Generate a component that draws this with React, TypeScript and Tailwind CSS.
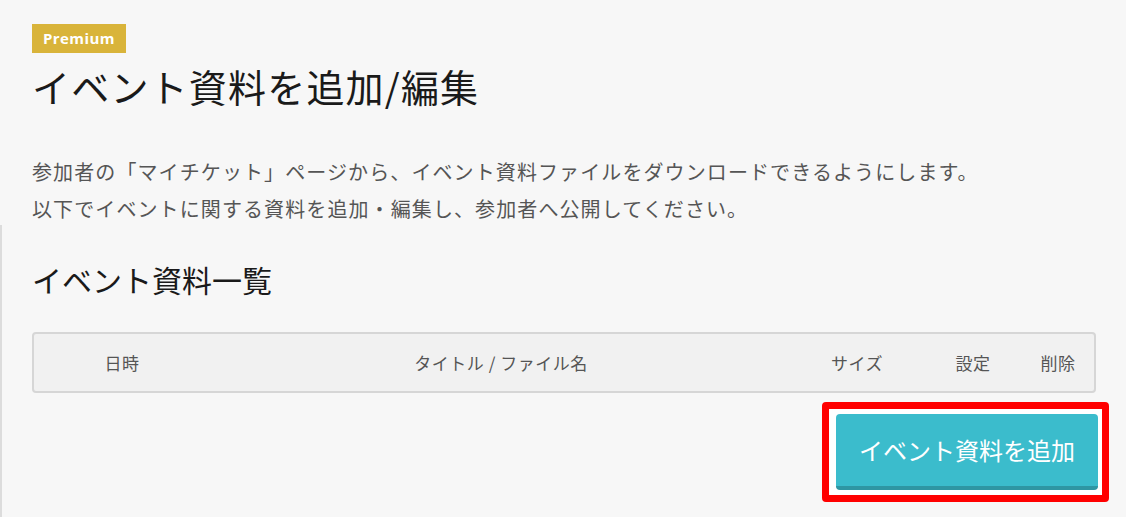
const jp = { fontFamily: '"Noto Sans CJK JP", "Liberation Sans", sans-serif' };

export default function App() {
  return (
    <div className="relative h-[517px] w-[1126px] overflow-hidden bg-[#f7f7f7]" style={jp}>
      {/* left edge line */}
      <div className="absolute left-0 top-[225px] bottom-0 w-[2px] bg-[#dcdcdc]" />

      <div className="pl-[32px] pr-[30px] pt-[24px]">
        <span
          className="inline-block bg-[#d9b43a] px-[11px] py-[5px] text-[15px] font-bold leading-[19px] tracking-[0.4px] text-white"
          style={{ fontFamily: '"Open Sans", "Liberation Sans", sans-serif' }}
        >
          Premium
        </span>

        <h1 className="mt-[7px] text-[38px] leading-[52px] font-normal tracking-[1.2px] text-[#1a1a1a]">
          イベント資料を追加/編集
        </h1>

        <div className="mt-[41px] text-[20px] leading-[37px] tracking-[1.1px] text-[#555]">
          <p>参加者の「マイチケット」ページから、イベント資料ファイルをダウンロードできるようにします。</p>
          <p>以下でイベントに関する資料を追加・編集し、参加者へ公開してください。</p>
        </div>

        <h2 className="mt-[31px] text-[30px] leading-[42px] font-normal text-[#1a1a1a]">
          イベント資料一覧
        </h2>

        <div className="mt-[32px] flex h-[61px] w-[1064px] items-center rounded-[4px] border-2 border-[#d6d6d6] bg-[#f1f1f1] text-[17px] tracking-[0.5px] text-[#555]">
          <div className="w-[176px] text-center">日時</div>
          <div className="w-[582px] text-center">タイトル / ファイル名</div>
          <div className="w-[130px] text-center">サイズ</div>
          <div className="w-[102px] text-center">設定</div>
          <div className="w-[68px] text-center">削除</div>
        </div>

        <div className="mt-[9px] flex w-[1077px] justify-end">
          <div className="rounded-[4px] border-[7px] border-[#ff0000] bg-white py-[5px] pl-[7px] pr-[4px]">
            <button className="flex h-[76px] w-[262px] items-center justify-center rounded-[4px] border-b-4 border-[#2e96a3] bg-[#3bbccc] text-[24px] text-white">
              イベント資料を追加
            </button>
          </div>
        </div>
      </div>
    </div>
  );
}
